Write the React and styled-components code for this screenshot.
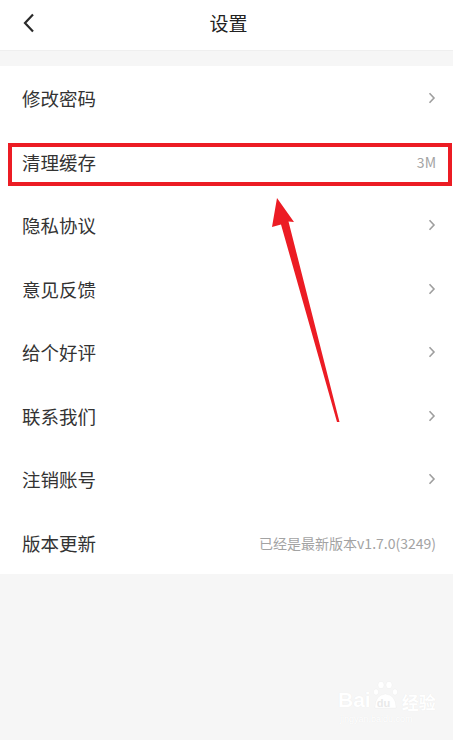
import React from "react";
import styled, { createGlobalStyle } from "styled-components";

const Global = createGlobalStyle`
  html, body { margin: 0; padding: 0; background: #f6f6f6; }
  body { font-family: "Noto Sans CJK SC", "Noto Sans", sans-serif; }
  * { box-sizing: border-box; }
`;

const Page = styled.div`
  position: relative;
  width: 453px;
  min-height: 740px;
  background: #f6f6f6;
  overflow: hidden;
`;

const Header = styled.header`
  position: relative;
  height: 51px;
  background: #fff;
  border-bottom: 1px solid #efefef;
  display: flex;
  align-items: center;
  justify-content: center;
`;

const BackButton = styled.button`
  position: absolute;
  left: 17px;
  top: 10px;
  width: 24px;
  height: 26px;
  padding: 0;
  border: 0;
  background: none;
  display: flex;
  align-items: center;
  justify-content: center;
`;

const Title = styled.h1`
  margin: 0 0 0 4px;
  font-size: 19px;
  font-weight: 400;
  color: #222;
  line-height: 1;
  margin-top: -6px;
`;

const Gap = styled.div`
  height: 15px;
`;

const List = styled.ul`
  list-style: none;
  margin: 0;
  padding: 0;
  background: #fff;
`;

const Row = styled.li`
  position: relative;
  height: 63.5px;
  padding: 1px 17px 0 22px;
  display: flex;
  align-items: center;
  justify-content: space-between;

  ${(p) =>
    p.$highlight &&
    `
    &::after {
      content: "";
      position: absolute;
      left: 8px;
      right: 1px;
      top: 13px;
      bottom: 7px;
      border: 4px solid #ec1c24;
      pointer-events: none;
    }
  `}
`;

const Label = styled.span`
  font-size: 18.5px;
  color: #333;
`;

const Value = styled.span`
  font-size: 14px;
  color: #a3a3a3;
`;

const Overlay = styled.svg`
  position: absolute;
  left: 0;
  top: 0;
  pointer-events: none;
`;

const Watermark = styled.div`
  position: absolute;
  left: 338px;
  top: 680px;
  display: flex;
  flex-direction: column;
  color: #fff;
  text-shadow: 0 0 1px rgba(0, 0, 0, 0.07);
  pointer-events: none;
`;

const WmTop = styled.div`
  display: flex;
  align-items: flex-end;
  font-family: "Liberation Sans", Arial, sans-serif;
  font-size: 21px;
  font-weight: 700;
  line-height: 1;
`;

const WmPaw = styled.span`
  position: relative;
  display: inline-flex;
  width: 27px;
  height: 30px;
  margin: 0 1px;
`;

const WmDu = styled.span`
  position: absolute;
  left: 5px;
  bottom: 1px;
  font-size: 11px;
  color: #e9e9e9;
  text-shadow: none;
`;

const WmCn = styled.span`
  font-family: "Noto Sans CJK SC", sans-serif;
  font-size: 17px;
  font-weight: 700;
  margin-left: 2px;
`;

const WmUrl = styled.div`
  font-family: "Liberation Sans", Arial, sans-serif;
  font-size: 9px;
  margin-top: 4px;
  margin-left: 2px;
`;

const Chevron = () => (
  <svg width="8" height="12" viewBox="0 0 8 12">
    <path d="M1.5 1.2 L6 6 L1.5 10.8" fill="none" stroke="#9e9e9e" strokeWidth="1.6" />
  </svg>
);

const items = [
  { label: "修改密码" },
  { label: "清理缓存", value: "3M", highlight: true },
  { label: "隐私协议" },
  { label: "意见反馈" },
  { label: "给个好评" },
  { label: "联系我们" },
  { label: "注销账号" },
  { label: "版本更新", value: "已经是最新版本v1.7.0(3249)" },
];

export default function App() {
  return (
    <>
      <Global />
      <Page>
        <Header>
          <BackButton aria-label="返回">
            <svg width="16" height="22" viewBox="0 0 16 22">
              <path d="M12 2.5 L4 11 L12 19.5" fill="none" stroke="#2a2a2a" strokeWidth="2.2" />
            </svg>
          </BackButton>
          <Title>设置</Title>
        </Header>
        <Gap />
        <List>
          {items.map((it) => (
            <Row key={it.label} $highlight={it.highlight}>
              <Label>{it.label}</Label>
              {it.value ? <Value>{it.value}</Value> : <Chevron />}
            </Row>
          ))}
        </List>
        <Watermark>
          <WmTop>
            <span>Bai</span>
            <WmPaw>
              <svg width="27" height="30" viewBox="0 0 27 30">
                <g fill="#fff" stroke="rgba(0,0,0,0.05)" strokeWidth="0.6">
                  <ellipse cx="9" cy="5" rx="3" ry="3.6" />
                  <ellipse cx="17" cy="5" rx="3" ry="3.6" />
                  <ellipse cx="4" cy="12" rx="2.6" ry="3" />
                  <ellipse cx="23" cy="12" rx="2.6" ry="3" />
                  <path d="M3 28 Q3 15 13.5 14 Q24 15 24 28 Z" />
                </g>
              </svg>
              <WmDu>du</WmDu>
            </WmPaw>
            <WmCn>经验</WmCn>
          </WmTop>
          <WmUrl>jingyan.baidu.com</WmUrl>
        </Watermark>
        <Overlay width="453" height="740" viewBox="0 0 453 740">
          <polygon
            points="277,198 294,222 288.5,221.5 339.5,422 337,422 281,224.5 272,227"
            fill="#ec1c24"
          />
        </Overlay>
      </Page>
    </>
  );
}
